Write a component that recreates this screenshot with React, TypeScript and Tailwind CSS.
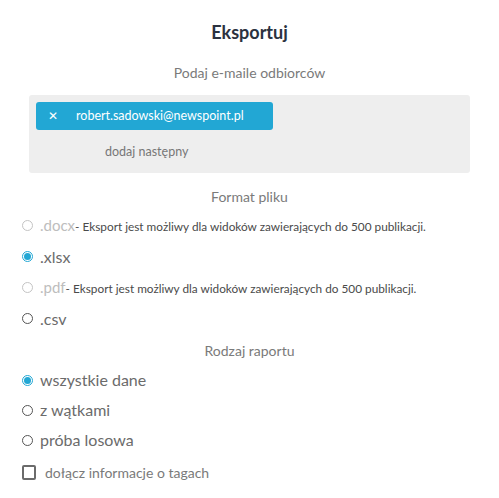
import React, { useState } from 'react';

const font = { fontFamily: 'Lato, "Noto Sans", sans-serif' };

// Radio circle
const Radio: React.FC<{ checked?: boolean; disabled?: boolean }> = ({ checked, disabled }) => (
  <span
    className={`w-[11px] h-[11px] rounded-full border flex items-center justify-center shrink-0 ${
      checked ? 'border-[#22a7d4]' : disabled ? 'border-[#c4c4c4]' : 'border-[#555]'
    }`}
  >
    {checked && <span className="w-[7px] h-[7px] rounded-full bg-[#22a7d4]" />}
  </span>
);

const Option: React.FC<{ label: string; checked?: boolean; disabled?: boolean; note?: string; tall?: boolean }> = ({
  label,
  checked,
  disabled,
  note,
  tall,
}) => (
  <div className={`${tall ? 'h-[31px]' : 'h-[30px]'} flex items-center pl-[22px]`}>
    <Radio checked={checked} disabled={disabled} />
    <span className={`ml-[7px] ${disabled ? 'text-[15px] text-[#bdbdbd]' : 'text-[16px] text-[#6b6b6b]'}`}>{label}</span>
    {note && <span className="text-[11.8px] text-[#4a4a4a] mt-[2px]">{note}</span>}
  </div>
);

export default function App() {
  const [emails] = useState(['robert.sadowski@newspoint.pl']);
  const note = '- Eksport jest możliwy dla widoków zawierających do 500 publikacji.';

  return (
    <div className="w-[499px] h-[498px] bg-white" style={font}>
      <h1 className="text-center text-[18px] font-bold text-[#2b3240] pt-[20px] leading-[24px]">Eksportuj</h1>
      <p className="text-center text-[14px] text-[#7a7a7a] mt-[20px] leading-[18px]">Podaj e-maile odbiorców</p>

      {/* Recipients box */}
      <div className="mx-[29px] mt-[13px] h-[78px] bg-[#eeeeee] rounded-[3px] p-[7px]">
        {emails.map((e) => (
          <div key={e} className="w-[237px] h-[28px] bg-[#22a7d4] rounded-[3px] flex items-center text-white">
            <span className="w-[40px] pl-[12px] text-[12px]">✕</span>
            <span className="text-[12.5px]">{e}</span>
          </div>
        ))}
        <div className="pl-[69px] mt-[14px] text-[12.5px] text-[#777] leading-[16px]">dodaj następny</div>
      </div>

      <p className="text-center text-[14px] text-[#7a7a7a] mt-[15px] leading-[18px]">Format pliku</p>
      <div className="mt-[4px]">
        <Option label=".docx" disabled note={note} tall />
        <Option label=".xlsx" checked tall />
        <Option label=".pdf" disabled note={note} tall />
        <Option label=".csv" tall />
      </div>

      <p className="text-center text-[14px] text-[#7a7a7a] mt-[8px] leading-[18px]">Rodzaj raportu</p>
      <div className="mt-[5px]">
        <Option label="wszystkie dane" checked />
        <Option label="z wątkami" />
        <Option label="próba losowa" />
      </div>

      <div className="h-[34px] flex items-center pl-[22px]">
        <span className="w-[14px] h-[15px] border-2 border-[#6b6b6b] rounded-[2px] shrink-0" />
        <span className="ml-[9px] text-[14px] text-[#7a7a7a]">dołącz informacje o tagach</span>
      </div>
    </div>
  );
}
